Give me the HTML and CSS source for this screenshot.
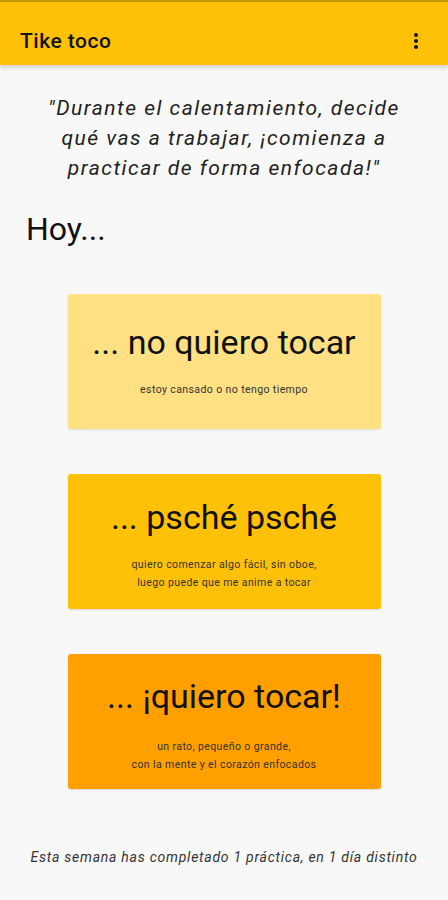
FILE: index.html
```html
<!DOCTYPE html>
<html lang="es">
<head>
    <meta charset="UTF-8">
    <meta name="viewport" content="width=device-width, initial-scale=1.0">
    <title>Tike toco</title>
    <link rel="stylesheet" href="styles.css">
</head>
<body>
    <div class="status"></div>
    <header class="appbar">
        <h1>Tike toco</h1>
        <svg class="menu" width="6" height="18" viewBox="0 0 6 18">
            <circle cx="3" cy="3" r="2" fill="#111"/>
            <circle cx="3" cy="9" r="2" fill="#111"/>
            <circle cx="3" cy="15" r="2" fill="#111"/>
        </svg>
    </header>

    <main class="content">
        <p class="quote">"Durante el calentamiento, decide qué vas a trabajar, ¡comienza a practicar de forma enfocada!"</p>
        <h2 class="today">Hoy...</h2>

        <div class="options">
            <div class="option light">
                <div class="title">... no quiero tocar</div>
                <div class="sub">estoy cansado o no tengo tiempo</div>
            </div>
            <div class="option mid">
                <div class="title">... psché psché</div>
                <div class="sub">quiero comenzar algo fácil, sin oboe,<br>luego puede que me anime a tocar</div>
            </div>
            <div class="option dark">
                <div class="title">... ¡quiero tocar!</div>
                <div class="sub">un rato, pequeño o grande,<br>con la mente y el corazón enfocados</div>
            </div>
        </div>

        <p class="footer">Esta semana has completado 1 práctica, en 1 día distinto</p>
    </main>
</body>
</html>
```

FILE: styles.css
```css
body {
    margin: 0;
    font-family: Roboto, "Noto Sans", sans-serif;
    background-color: #f8f8f8;
    color: #111;
    width: 448px;
    height: 900px;
    overflow: hidden;
}
.status {
    height: 2px;
    background-color: #c79a0c;
}
.appbar {
    height: 63px;
    box-sizing: border-box;
    background-color: #ffc107;
    display: flex;
    align-items: center;
    justify-content: space-between;
    padding: 14px 29px 0 20px;
    box-shadow: 0 2px 5px rgba(0, 0, 0, 0.2);
    position: relative;
}
.appbar h1 {
    margin: 0;
    font-size: 21px;
    font-weight: 500;
    letter-spacing: 0.5px;
    color: #111;
}
.content {
    display: flex;
    flex-direction: column;
}
.quote {
    margin: 28px 36px 0;
    text-align: center;
    font-style: italic;
    font-size: 21px;
    letter-spacing: 1.5px;
    line-height: 30px;
    color: #222;
}
.today {
    margin: 26px 0 0 26px;
    font-size: 32px;
    font-weight: 400;
    line-height: 40px;
}
.options {
    display: flex;
    flex-direction: column;
    align-items: center;
    gap: 45px;
    margin-top: 45px;
}
.option {
    width: 313px;
    height: 135px;
    border-radius: 3px;
    box-shadow: 0 1px 2px rgba(0, 0, 0, 0.12);
    display: flex;
    flex-direction: column;
    align-items: center;
    text-align: center;
    box-sizing: border-box;
}
.option .title {
    font-size: 34px;
    line-height: 40px;
    margin-top: 28px;
}
.option .sub {
    font-size: 10.5px;
    letter-spacing: 0.4px;
    line-height: 18px;
    color: #333;
    margin-top: 19px;
}
.light {
    background-color: #ffe083;
}
.mid {
    background-color: #ffc107;
}
.mid .title {
    margin-top: 23px;
}
.dark {
    background-color: #ffa000;
}
.dark .title {
    margin-top: 22px;
}
.dark .sub {
    margin-top: 22px;
}
.footer {
    margin: 60px 0 0;
    text-align: center;
    font-style: italic;
    font-size: 14px;
    letter-spacing: 0.75px;
    color: #333;
}
```
